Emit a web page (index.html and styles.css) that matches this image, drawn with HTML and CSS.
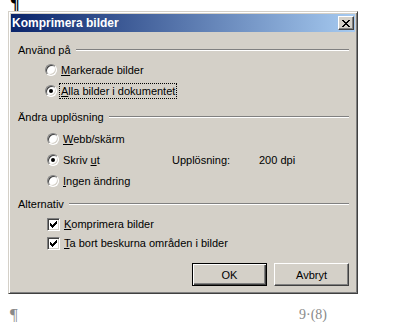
FILE: index.html
```html
<!DOCTYPE html>
<html>
<head>
    <title>Komprimera bilder</title>
    <link rel="stylesheet" href="styles.css">
</head>
<body>
    <div class="doc">
        <div class="mark-top"><span>¶</span></div>

        <div class="dialog">
            <div class="titlebar">
                <span class="title">Komprimera bilder</span>
                <button class="close" aria-label="Stäng">
                    <svg width="8" height="7" viewBox="0 0 8 7" shape-rendering="crispEdges">
                        <path d="M0 0h2v1h-2z M6 0h2v1h-2z M1 1h2v1h-2z M5 1h2v1h-2z M2 2h4v1h-4z M3 3h2v1h-2z M2 4h4v1h-4z M1 5h2v1h-2z M5 5h2v1h-2z M0 6h2v1h-2z M6 6h2v1h-2z" fill="#000"/>
                    </svg>
                </button>
            </div>

            <div class="content">
                <!-- Använd på -->
                <div class="group-head"><span>Använd på</span><span class="rule"></span></div>
                <div class="option first g1">
                    <span class="radio"></span>
                    <span class="label"><u>M</u>arkerade bilder</span>
                </div>
                <div class="option g1">
                    <span class="radio checked"></span>
                    <span class="label focus"><u>A</u>lla bilder i dokumentet</span>
                </div>

                <!-- Ändra upplösning -->
                <div class="group-head gap-10"><span>Ändra upplösning</span><span class="rule"></span></div>
                <div class="option first-2 g2">
                    <span class="radio"></span>
                    <span class="label"><u>W</u>ebb/skärm</span>
                </div>
                <div class="option g2">
                    <span class="radio checked"></span>
                    <span class="label wide">Skriv <u>u</u>t</span>
                    <span class="res-label">Upplösning:</span>
                    <span>200 dpi</span>
                </div>
                <div class="option g2">
                    <span class="radio"></span>
                    <span class="label"><u>I</u>ngen ändring</span>
                </div>

                <!-- Alternativ -->
                <div class="group-head gap-7"><span>Alternativ</span><span class="rule"></span></div>
                <div class="option first g3">
                    <span class="check">
                        <svg width="7" height="7" viewBox="0 0 7 7" shape-rendering="crispEdges">
                            <path d="M6 0h1v3h-1z M5 1h1v3h-1z M4 2h1v3h-1z M3 3h1v3h-1z M2 4h1v3h-1z M1 3h1v3h-1z M0 2h1v3h-1z" fill="#000"/>
                        </svg>
                    </span>
                    <span class="label"><u>K</u>omprimera bilder</span>
                </div>
                <div class="option tight g3">
                    <span class="check">
                        <svg width="7" height="7" viewBox="0 0 7 7" shape-rendering="crispEdges">
                            <path d="M6 0h1v3h-1z M5 1h1v3h-1z M4 2h1v3h-1z M3 3h1v3h-1z M2 4h1v3h-1z M1 3h1v3h-1z M0 2h1v3h-1z" fill="#000"/>
                        </svg>
                    </span>
                    <span class="label"><u>T</u>a bort beskurna områden i bilder</span>
                </div>

                <div class="buttons">
                    <button class="btn default">OK</button>
                    <button class="btn">Avbryt</button>
                </div>
            </div>
        </div>

        <div class="footer">
            <span class="mark">¶</span>
            <span class="page-no">9·(8)</span>
        </div>
    </div>
</body>
</html>
```

FILE: styles.css
```css
body {
    margin: 0;
    padding: 0;
    background-color: #ffffff;
    font-family: "Liberation Sans", Arial, sans-serif;
    font-size: 11px;
    color: #000000;
}

.doc {
    width: 413px;
    height: 322px;
    overflow: hidden;
}

/* pilcrow cut off at the top of the page */
.mark-top {
    height: 11px;
    overflow: hidden;
    padding-left: 10px;
}

.mark-top span {
    display: block;
    font-family: "Liberation Serif", serif;
    font-weight: bold;
    font-size: 18px;
    line-height: 18px;
    margin-top: -6px;
}

.dialog {
    box-sizing: border-box;
    margin-left: 8px;
    width: 350px;
    height: 283px;
    padding: 2px;
    background-color: #d4d0c8;
    border: 1px solid;
    border-color: #d4d0c8 #404040 #404040 #d4d0c8;
    box-shadow: inset 1px 1px #ffffff, inset -1px -1px #808080;
}

.titlebar {
    height: 18px;
    padding: 0 1px 0 1px;
    display: flex;
    align-items: center;
    justify-content: space-between;
    background: linear-gradient(to right, #0a246a, #a6caf0);
}

.title {
    color: #ffffff;
    font-weight: bold;
    font-size: 12px;
}

.close {
    box-sizing: border-box;
    width: 16px;
    height: 14px;
    padding: 0;
    display: flex;
    align-items: center;
    justify-content: center;
    background-color: #d4d0c8;
    border: 1px solid;
    border-color: #ffffff #404040 #404040 #ffffff;
    box-shadow: inset -1px -1px #808080;
}

.content {
    padding: 10px 6px 0 7px;
}

.group-head {
    display: flex;
    align-items: center;
    height: 16px;
}

.group-head.gap-10 {
    margin-top: 10px;
}

.group-head.gap-7 {
    margin-top: 7px;
}

.rule {
    flex: 1;
    margin-left: 5px;
    height: 0;
    border-top: 1px solid #808080;
    border-bottom: 1px solid #ffffff;
}

.option {
    display: flex;
    align-items: center;
    height: 16px;
    margin-top: 5px;
}

.option.first {
    margin-top: 4px;
}

.option.first-2 {
    margin-top: 6px;
}

.option.tight {
    margin-top: 3px;
}

.option.g1 {
    padding-left: 27px;
}

.option.g2 {
    padding-left: 29px;
}

.option.g3 {
    padding-left: 29px;
}

.label {
    margin-left: 2px;
    padding: 0 1px;
    line-height: 14px;
    border: 1px dotted transparent;
}

.label.focus {
    border-color: #000000;
}

.label.wide {
    width: 107px;
}

.res-label {
    width: 87px;
}

.radio {
    box-sizing: border-box;
    position: relative;
    width: 12px;
    height: 12px;
    border-radius: 50%;
    background-color: #ffffff;
    border: 1px solid;
    border-color: #808080 #ffffff #ffffff #808080;
    box-shadow: inset 1px 1px #404040, inset -1px -1px #d4d0c8;
}

.radio.checked::after {
    content: "";
    position: absolute;
    left: 3px;
    top: 3px;
    width: 4px;
    height: 4px;
    border-radius: 50%;
    background-color: #000000;
}

.check {
    box-sizing: border-box;
    width: 13px;
    height: 13px;
    display: flex;
    align-items: center;
    justify-content: center;
    background-color: #ffffff;
    border: 1px solid;
    border-color: #808080 #ffffff #ffffff #808080;
    box-shadow: inset 1px 1px #404040, inset -1px -1px #d4d0c8;
}

.buttons {
    display: flex;
    justify-content: flex-end;
    gap: 7px;
    margin-top: 12px;
}

.btn {
    box-sizing: border-box;
    width: 75px;
    height: 23px;
    padding: 0;
    font-family: "Liberation Sans", Arial, sans-serif;
    font-size: 11px;
    color: #000000;
    background-color: #d4d0c8;
    border: 1px solid;
    border-color: #ffffff #404040 #404040 #ffffff;
    box-shadow: inset -1px -1px #808080;
}

.btn.default {
    border-color: #000000;
    box-shadow: inset 1px 1px #ffffff, inset -1px -1px #404040, inset -2px -2px #808080;
}

.footer {
    display: flex;
    align-items: flex-start;
    padding-top: 12px;
    padding-left: 10px;
    color: #8a8a8a;
    font-family: "Liberation Serif", serif;
}

.mark {
    font-size: 17px;
    line-height: 17px;
    width: 289px;
}

.page-no {
    font-size: 14px;
    line-height: 17px;
}
```
